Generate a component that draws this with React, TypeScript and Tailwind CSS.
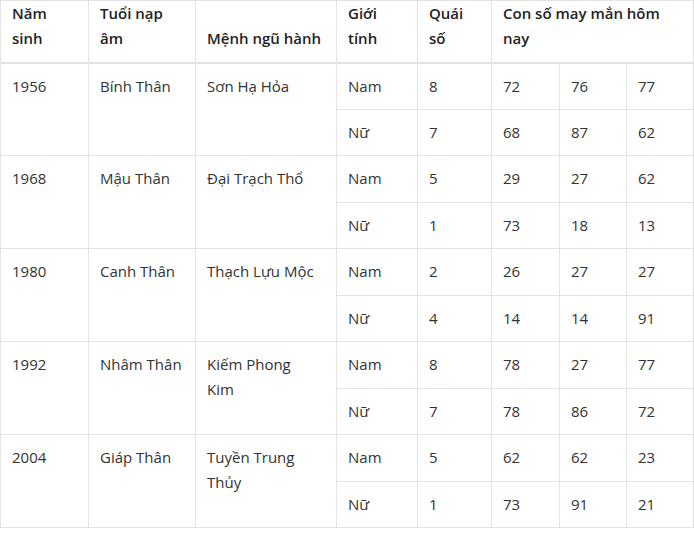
import React from 'react';

type Group = {
  year: string;
  napAm: string;
  menh: string;
  rows: { gender: string; quai: string; nums: string[] }[];
};

const groups: Group[] = [
  {
    year: '1956',
    napAm: 'Bính Thân',
    menh: 'Sơn Hạ Hỏa',
    rows: [
      { gender: 'Nam', quai: '8', nums: ['72', '76', '77'] },
      { gender: 'Nữ', quai: '7', nums: ['68', '87', '62'] },
    ],
  },
  {
    year: '1968',
    napAm: 'Mậu Thân',
    menh: 'Đại Trạch Thổ',
    rows: [
      { gender: 'Nam', quai: '5', nums: ['29', '27', '62'] },
      { gender: 'Nữ', quai: '1', nums: ['73', '18', '13'] },
    ],
  },
  {
    year: '1980',
    napAm: 'Canh Thân',
    menh: 'Thạch Lựu Mộc',
    rows: [
      { gender: 'Nam', quai: '2', nums: ['26', '27', '27'] },
      { gender: 'Nữ', quai: '4', nums: ['14', '14', '91'] },
    ],
  },
  {
    year: '1992',
    napAm: 'Nhâm Thân',
    menh: 'Kiếm Phong Kim',
    rows: [
      { gender: 'Nam', quai: '8', nums: ['78', '27', '77'] },
      { gender: 'Nữ', quai: '7', nums: ['78', '86', '72'] },
    ],
  },
  {
    year: '2004',
    napAm: 'Giáp Thân',
    menh: 'Tuyền Trung Thủy',
    rows: [
      { gender: 'Nam', quai: '5', nums: ['62', '62', '23'] },
      { gender: 'Nữ', quai: '1', nums: ['73', '91', '21'] },
    ],
  },
];

const cell = 'border border-[#e3e3e3] pl-[11px] pr-2 pt-[10px] align-top text-left';
const menhCell = 'border border-[#e3e3e3] pl-[11px] pr-[20px] pt-[10px] align-top text-left';
const head = 'border border-[#e3e3e3] border-b-2 pl-[11px] pr-2 pt-0 pb-[11px] align-bottom text-left font-semibold text-[#222]';

export default function App() {
  return (
    <div className="min-h-[533px] bg-white">
      <table
        className="w-[693px] table-fixed border-collapse text-[15px] leading-[25px] text-[#333]"
        style={{ fontFamily: '"Open Sans", "Liberation Sans", sans-serif' }}
      >
        <colgroup>
          <col className="w-[88px]" />
          <col className="w-[107px]" />
          <col className="w-[141px]" />
          <col className="w-[81px]" />
          <col className="w-[74px]" />
          <col className="w-[68px]" />
          <col className="w-[67px]" />
          <col className="w-[67px]" />
        </colgroup>
        <thead>
          <tr>
            <th className={head}>Năm sinh</th>
            <th className={head}>Tuổi nạp âm</th>
            <th className={head}>Mệnh ngũ hành</th>
            <th className={head}>Giới tính</th>
            <th className={head}>Quái số</th>
            <th className={head} colSpan={3}>
              Con số may mắn hôm nay
            </th>
          </tr>
        </thead>
        <tbody>
          {groups.map((g, gi) =>
            g.rows.map((r, ri) => (
              <tr
                key={`${g.year}-${r.gender}`}
                className={ri === 0 ? (gi === 0 ? 'h-[46px]' : 'h-[47px]') : 'h-[46px]'}
              >
                {ri === 0 && (
                  <>
                    <td className={cell} rowSpan={2}>{g.year}</td>
                    <td className={cell} rowSpan={2}>{g.napAm}</td>
                    <td className={menhCell} rowSpan={2}>{g.menh}</td>
                  </>
                )}
                <td className={cell}>{r.gender}</td>
                <td className={cell}>{r.quai}</td>
                {r.nums.map((n, ni) => (
                  <td key={ni} className={cell}>{n}</td>
                ))}
              </tr>
            )),
          )}
        </tbody>
      </table>
    </div>
  );
}
